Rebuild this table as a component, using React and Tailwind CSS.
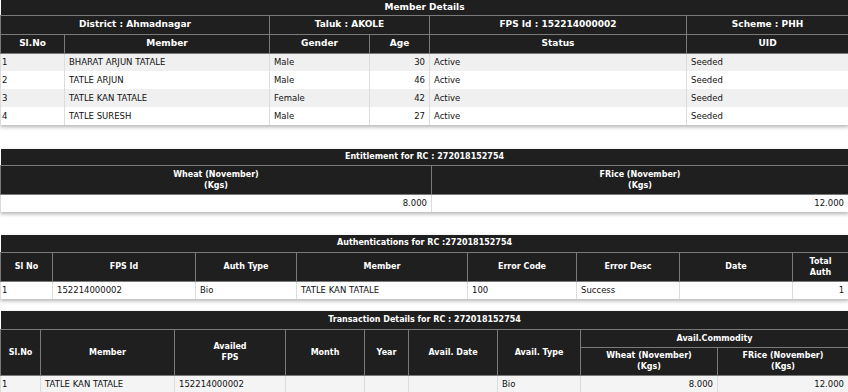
import React from 'react';

const members = [
  { no: 1, name: 'BHARAT ARJUN TATALE', gender: 'Male', age: 30 },
  { no: 2, name: 'TATLE ARJUN', gender: 'Male', age: 46 },
  { no: 3, name: 'TATLE KAN TATALE', gender: 'Female', age: 42 },
  { no: 4, name: 'TATLE SURESH', gender: 'Male', age: 27 },
];

const th = 'border border-[#7a7a7a] bg-[#1f1f1f] text-white font-bold text-center px-1 leading-[11px] text-[8px]';
const td = 'border-x border-[#dcdcdc] px-1 text-[#111] text-[8.5px]';
const tdFirst = 'border-x border-[#dcdcdc] pl-[1px] text-[#111] text-[8.5px]';

function Title({ cols, h, children }) {
  return (
    <tr className={h}>
      <td colSpan={cols} className="bg-[#1f1f1f] text-white font-bold text-center border-b border-[#7a7a7a] leading-none text-[8px]">
        {children}
      </td>
    </tr>
  );
}

export default function App() {
  return (
    <div className="w-[848px] h-[392px] overflow-hidden bg-white" style={{ fontFamily: '"DejaVu Sans", Verdana, sans-serif' }}>
      {/* member details */}
      <table className="w-full table-fixed border-collapse shadow-[0_2px_4px_rgba(0,0,0,0.3)]">
        <colgroup>
          <col className="w-[64px]" />
          <col className="w-[205px]" />
          <col className="w-[100px]" />
          <col className="w-[60px]" />
          <col className="w-[257px]" />
          <col className="w-[162px]" />
        </colgroup>
        <tbody>
          <tr className="h-[15px]">
            <td colSpan={6} className="bg-[#1f1f1f] text-white font-bold text-center border-b border-[#7a7a7a] leading-none text-[9px]">
              Member Details
            </td>
          </tr>
          <tr className="h-[19px]">
            <td colSpan={2} className={`${th} text-[9px]`}>District : Ahmadnagar</td>
            <td colSpan={2} className={`${th} text-[9px]`}>Taluk : AKOLE</td>
            <td className={`${th} text-[9px]`}>FPS Id : 152214000002</td>
            <td className={`${th} text-[9px]`}>Scheme : PHH</td>
          </tr>
          <tr className="h-[19px]">
            <td className={`${th} text-[9px]`}>Sl.No</td>
            <td className={`${th} text-[9px]`}>Member</td>
            <td className={`${th} text-[9px]`}>Gender</td>
            <td className={`${th} text-[9px]`}>Age</td>
            <td className={`${th} text-[9px]`}>Status</td>
            <td className={`${th} text-[9px]`}>UID</td>
          </tr>
          {members.map((m, i) => (
            <tr key={m.no} className={`h-[18px] ${i % 2 === 0 ? 'bg-[#f0f0f0]' : 'bg-white'}`}>
              <td className={tdFirst}>{m.no}</td>
              <td className={td}>{m.name}</td>
              <td className={td}>{m.gender}</td>
              <td className={`${td} text-right`}>{m.age}</td>
              <td className={td}>Active</td>
              <td className={td}>Seeded</td>
            </tr>
          ))}
        </tbody>
      </table>

      {/* entitlement */}
      <table className="mt-[24px] w-full table-fixed border-collapse shadow-[0_2px_4px_rgba(0,0,0,0.3)]">
        <colgroup>
          <col className="w-[431px]" />
          <col className="w-[417px]" />
        </colgroup>
        <tbody>
          <Title cols={2} h="h-[16px]">Entitlement for RC : 272018152754</Title>
          <tr className="h-[29px]">
            <td className={th}>Wheat (November)<br />(Kgs)</td>
            <td className={th}>FRice (November)<br />(Kgs)</td>
          </tr>
          <tr className="h-[18px] bg-white">
            <td className={`${td} text-right`}>8.000</td>
            <td className={`${td} text-right`}>12.000</td>
          </tr>
        </tbody>
      </table>

      {/* authentications */}
      <table className="mt-[23px] w-full table-fixed border-collapse shadow-[0_2px_4px_rgba(0,0,0,0.3)]">
        <colgroup>
          <col className="w-[52px]" />
          <col className="w-[143px]" />
          <col className="w-[101px]" />
          <col className="w-[171px]" />
          <col className="w-[109px]" />
          <col className="w-[103px]" />
          <col className="w-[113px]" />
          <col className="w-[56px]" />
        </colgroup>
        <tbody>
          <Title cols={8} h="h-[17px]">Authentications for RC :272018152754</Title>
          <tr className="h-[29px]">
            <td className={th}>Sl No</td>
            <td className={th}>FPS Id</td>
            <td className={th}>Auth Type</td>
            <td className={th}>Member</td>
            <td className={th}>Error Code</td>
            <td className={th}>Error Desc</td>
            <td className={th}>Date</td>
            <td className={th}>Total<br />Auth</td>
          </tr>
          <tr className="h-[18px] bg-white">
            <td className={tdFirst}>1</td>
            <td className={td}>152214000002</td>
            <td className={td}>Bio</td>
            <td className={td}>TATLE KAN TATALE</td>
            <td className={td}>100</td>
            <td className={td}>Success</td>
            <td className={td}></td>
            <td className={`${td} text-right`}>1</td>
          </tr>
        </tbody>
      </table>

      {/* transactions */}
      <table className="mt-[12px] w-full table-fixed border-collapse shadow-[0_2px_4px_rgba(0,0,0,0.3)]">
        <colgroup>
          <col className="w-[40px]" />
          <col className="w-[134px]" />
          <col className="w-[111px]" />
          <col className="w-[79px]" />
          <col className="w-[44px]" />
          <col className="w-[89px]" />
          <col className="w-[83px]" />
          <col className="w-[137px]" />
          <col className="w-[131px]" />
        </colgroup>
        <tbody>
          <Title cols={9} h="h-[18px]">Transaction Details for RC : 272018152754</Title>
          <tr className="h-[18px]">
            <td rowSpan={2} className={th}>Sl.No</td>
            <td rowSpan={2} className={th}>Member</td>
            <td rowSpan={2} className={th}>Availed<br />FPS</td>
            <td rowSpan={2} className={th}>Month</td>
            <td rowSpan={2} className={th}>Year</td>
            <td rowSpan={2} className={th}>Avail. Date</td>
            <td rowSpan={2} className={th}>Avail. Type</td>
            <td colSpan={2} className={th}>Avail.Commodity</td>
          </tr>
          <tr className="h-[28px]">
            <td className={th}>Wheat (November)<br />(Kgs)</td>
            <td className={th}>FRice (November)<br />(Kgs)</td>
          </tr>
          <tr className="h-[18px] bg-[#f4f4f4]">
            <td className={tdFirst}>1</td>
            <td className={td}>TATLE KAN TATALE</td>
            <td className={td}>152214000002</td>
            <td className={td}></td>
            <td className={td}></td>
            <td className={td}></td>
            <td className={td}>Bio</td>
            <td className={`${td} text-right`}>8.000</td>
            <td className={`${td} text-right`}>12.000</td>
          </tr>
        </tbody>
      </table>
    </div>
  );
}
